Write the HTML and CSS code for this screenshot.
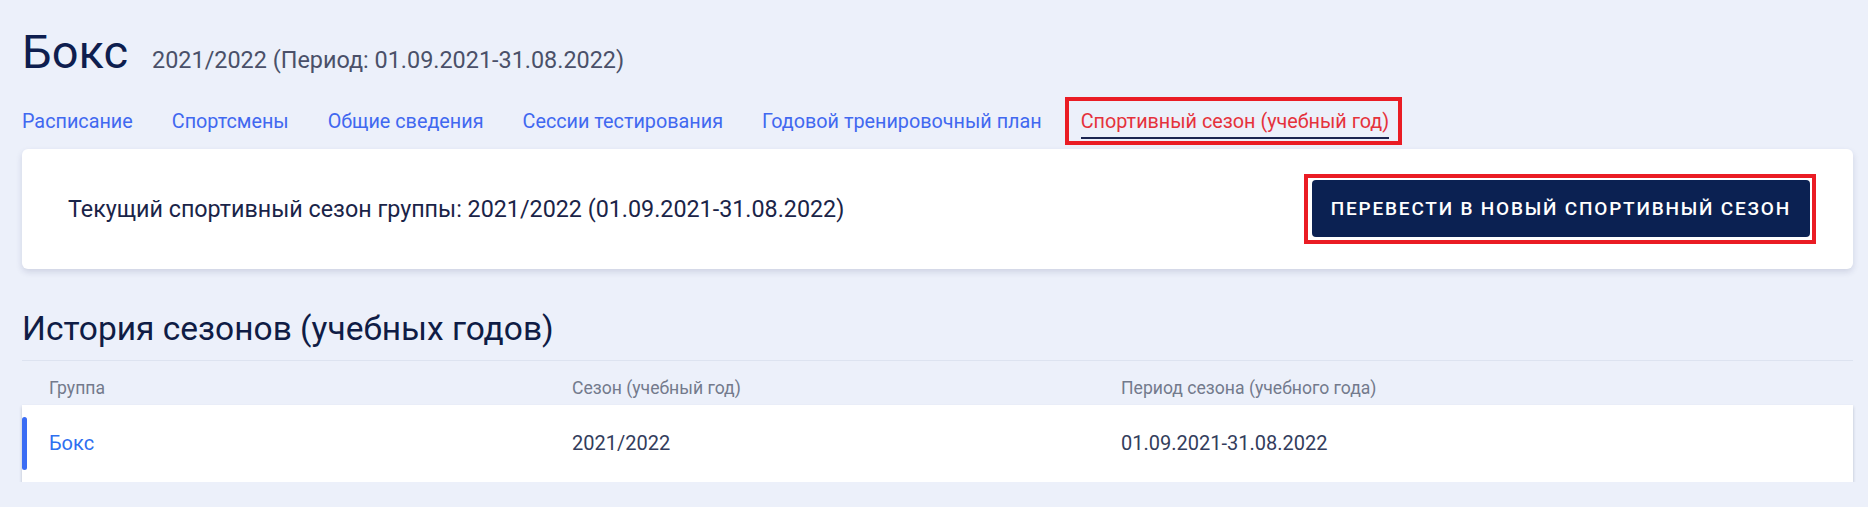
FILE: index.html
```html
<!DOCTYPE html>
<html lang="ru">
<head>
  <meta charset="UTF-8">
  <meta name="viewport" content="width=device-width, initial-scale=1.0">
  <title>Бокс — спортивный сезон</title>
  <link rel="stylesheet" href="styles.css">
</head>
<body>
  <div class="page">
    <header class="group-header">
      <h1>Бокс</h1>
      <span class="group-period">2021/2022 (Период: 01.09.2021-31.08.2022)</span>
    </header>

    <nav class="tabs">
      <a href="#" class="tab">Расписание</a>
      <a href="#" class="tab">Спортсмены</a>
      <a href="#" class="tab">Общие сведения</a>
      <a href="#" class="tab">Сессии тестирования</a>
      <a href="#" class="tab">Годовой тренировочный план</a>
      <a href="#" class="tab tab-active">Спортивный сезон (учебный год)</a>
    </nav>

    <section class="season-card">
      <p class="season-current">Текущий спортивный сезон группы: 2021/2022 (01.09.2021-31.08.2022)</p>
      <button type="button" class="btn-primary">Перевести в новый спортивный сезон</button>
    </section>

    <h2 class="section-title">История сезонов (учебных годов)</h2>

    <div class="history">
      <div class="history-head">
        <span>Группа</span>
        <span>Сезон (учебный год)</span>
        <span>Период сезона (учебного года)</span>
      </div>
      <div class="history-row">
        <a href="#" class="history-link">Бокс</a>
        <span>2021/2022</span>
        <span>01.09.2021-31.08.2022</span>
      </div>
    </div>
  </div>
</body>
</html>
```

FILE: styles.css
```css
body {
  margin: 0;
  padding: 0;
  font-family: Roboto, "Liberation Sans", sans-serif;
  background-color: #ecf0fa;
  color: #0f1c45;
}

.page {
  width: 1831px;
  padding: 23px 0 0 22px;
}

.group-header {
  display: flex;
  align-items: baseline;
  gap: 24px;
}

.group-header h1 {
  margin: 0;
  font-size: 47px;
  font-weight: 400;
  line-height: 57.6px;
  color: #0e1e4f;
}

.group-period {
  font-size: 23.4px;
  color: #4a5069;
}

.tabs {
  display: flex;
  gap: 39px;
  margin-top: 29px;
}

.tab {
  position: relative;
  font-size: 19.8px;
  line-height: 24px;
  padding-bottom: 3px;
  border-bottom: 2px solid transparent;
  color: #4168f0;
  text-decoration: none;
}

.tab-active {
  color: #e5323c;
  border-bottom-color: #1b2550;
}

.tab-active::after {
  content: "";
  position: absolute;
  left: -16px;
  right: -13px;
  top: -13px;
  bottom: -8px;
  border: 4px solid #ea1c24;
}

.season-card {
  display: flex;
  align-items: center;
  justify-content: space-between;
  height: 120px;
  margin-top: 10px;
  padding: 0 43px 0 46px;
  box-sizing: border-box;
  background-color: #fff;
  border-radius: 6px;
  box-shadow: 0 3px 6px rgba(40, 50, 100, 0.15);
}

.season-current {
  margin: 0;
  font-size: 23.3px;
  color: #1a2448;
}

.btn-primary {
  position: relative;
  height: 57px;
  padding: 0 19px;
  font-family: inherit;
  font-size: 19px;
  font-weight: 500;
  letter-spacing: 1.8px;
  text-transform: uppercase;
  color: #fff;
  background-color: #0b2152;
  border: none;
  border-radius: 4px;
  cursor: pointer;
}

.btn-primary::after {
  content: "";
  position: absolute;
  top: -6px;
  right: -6px;
  bottom: -7px;
  left: -8px;
  border: 4px solid #ea1c24;
}

.section-title {
  margin: 39px 0 0;
  padding-bottom: 10px;
  font-size: 33.5px;
  font-weight: 400;
  line-height: 42px;
  color: #0f1c45;
  border-bottom: 1px solid #dde3f0;
}

.history-head,
.history-row {
  display: grid;
  grid-template-columns: 523px 549px 1fr;
  padding-left: 27px;
}

.history-head {
  padding-top: 17px;
  padding-bottom: 7px;
  font-size: 17.6px;
  color: #737a8c;
}

.history-row {
  position: relative;
  align-items: center;
  height: 77px;
  font-size: 20px;
  color: #333d5c;
  background-color: #fff;
  box-shadow: 0 2px 3px rgba(40, 50, 80, 0.25);
}

.history-row::before {
  content: "";
  position: absolute;
  left: 0;
  top: 12px;
  bottom: 12px;
  width: 5px;
  border-radius: 3px;
  background-color: #3a6cf4;
}

.history-link {
  color: #2e6ff0;
  text-decoration: none;
}
```
